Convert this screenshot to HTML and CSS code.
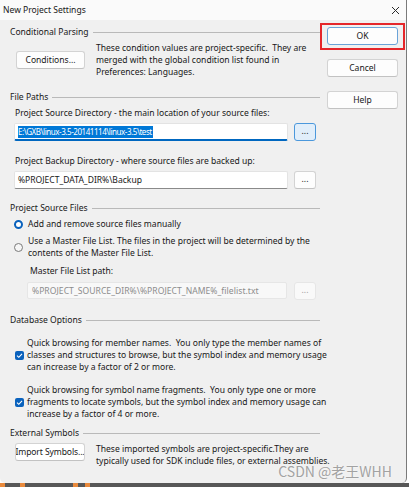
FILE: index.html
```html
<!DOCTYPE html>
<html>
<head>
<meta charset="utf-8">
<link rel="stylesheet" href="styles.css">
</head>
<body>
<div class="window">
  <div class="titlebar">
    <span class="title">New Project Settings</span>
    <svg class="close" width="9" height="9" viewBox="0 0 9 9"><path d="M1 1L8 8M8 1L1 8" stroke="#2b2b2b" stroke-width="1"/></svg>
  </div>
  <div class="content">
    <div class="main">
      <div class="ghead"><span>Conditional Parsing</span><i class="gline"></i></div>
      <div class="crow">
        <div class="btn cbtn">Conditions...</div>
        <div class="ctext">These condition values are project-specific.&nbsp; They are<br>merged with the global condition list found in<br>Preferences: Languages.</div>
      </div>

      <div class="ghead g2"><span>File Paths</span><i class="gline"></i></div>
      <div class="label">Project Source Directory - the main location of your source files:</div>
      <div class="inrow">
        <div class="input focus"><span class="sel">E:\GXB\linux-3.5-20141114\linux-3.5\test</span></div>
        <div class="btn dots hover">...</div>
      </div>
      <div class="label l2">Project Backup Directory - where source files are backed up:</div>
      <div class="inrow">
        <div class="input">%PROJECT_DATA_DIR%\Backup</div>
        <div class="btn dots">...</div>
      </div>

      <div class="ghead g3"><span>Project Source Files</span><i class="gline"></i></div>
      <div class="radio-row r1"><span class="radio on"></span><span>Add and remove source files manually</span></div>
      <div class="radio-row r2"><span class="radio"></span><span>Use a Master File List. The files in the project will be determined by the<br>contents of the Master File List.</span></div>
      <div class="label mlabel">Master File List path:</div>
      <div class="inrow in3">
        <div class="input disabled">%PROJECT_SOURCE_DIR%\%PROJECT_NAME%_filelist.txt</div>
        <div class="btn dots disabled">...</div>
      </div>

      <div class="ghead g4"><span>Database Options</span><i class="gline"></i></div>
      <div class="check-row c1"><span class="check"><svg width="9" height="9" viewBox="0 0 9 9"><path d="M2 4.6L3.8 6.3L7 2.8" fill="none" stroke="#fff" stroke-width="1.1"/></svg></span><span>Quick browsing for member names.&nbsp; You only type the member names of<br>classes and structures to browse, but the symbol index and memory usage<br>can increase by a factor of 2 or more.</span></div>
      <div class="check-row c2"><span class="check"><svg width="9" height="9" viewBox="0 0 9 9"><path d="M2 4.6L3.8 6.3L7 2.8" fill="none" stroke="#fff" stroke-width="1.1"/></svg></span><span>Quick browsing for symbol name fragments.&nbsp; You only type one or more<br>fragments to locate symbols, but the symbol index and memory usage can<br>increase by a factor of 4 or more.</span></div>

      <div class="ghead g5"><span>External Symbols</span><i class="gline"></i></div>
      <div class="crow irow">
        <div class="btn ibtn">Import Symbols...</div>
        <div class="ctext">These imported symbols are project-specific.They are<br>typically used for SDK include files, or external assemblies.</div>
      </div>
    </div>
    <div class="side">
      <div class="btn sbtn ok">OK</div>
      <div class="btn sbtn">Cancel</div>
      <div class="btn sbtn">Help</div>
    </div>
  </div>
  <div class="watermark">CSDN @老王WHH</div>
</div>
<div class="desk"><i class="o1"></i><i class="o2"></i><i class="o3"></i><i class="o4"></i></div>
</body>
</html>
```

FILE: styles.css
```css
* { box-sizing: border-box; }
body {
  margin: 0;
  width: 409px;
  height: 487px;
  overflow: hidden;
  background: #ffffff;
  font-family: "Noto Sans", "Noto Sans CJK SC", sans-serif;
  font-size: 8.55px;
  line-height: 12px;
  color: #181818;
}
.window {
  position: relative;
  width: 407px;
  height: 483px;
  background: #f0f0f0;
  border-right: 1px solid #7a7a7a;
  border-radius: 0 0 5px 5px;
  overflow: hidden;
}
.titlebar {
  height: 20px;
  background: #fafafa;
  display: flex;
  align-items: center;
  justify-content: space-between;
  padding: 0 6px 0 3px;
}
.close { display: block; }
.content {
  display: flex;
  padding: 6px 0 0 10px;
}
.main { width: 310px; }
.side {
  width: 71px;
  margin-left: 7px;
  padding-top: 1px;
  display: flex;
  flex-direction: column;
  gap: 14px;
}
.ghead {
  display: flex;
  align-items: center;
  gap: 4px;
  height: 12px;
}
.gline {
  flex: 1;
  height: 1px;
  background: #b9b9b9;
}
.g2 { margin-top: 13px; }
.g3 { margin-top: 13px; }
.g4 { margin-top: 14px; }
.g5 { margin-top: 7px; }

.btn {
  background: #fdfdfd;
  border: 1px solid #d3d3d3;
  border-bottom-color: #c2c2c2;
  border-radius: 3px;
  height: 18px;
  display: flex;
  align-items: center;
  justify-content: center;
  white-space: nowrap;
  overflow: hidden;
}
.crow {
  display: flex;
  align-items: center;
  margin-top: 4px;
  padding-left: 6px;
}
.cbtn { width: 69px; flex: none; }
.ctext { margin-left: 11px; white-space: nowrap; }
.irow { align-items: flex-start; padding-left: 5px; }
.ibtn { width: 70px; flex: none; background: #fff; padding: 0; letter-spacing: -0.1px; }

.label { padding-left: 5px; margin-top: 4px; white-space: nowrap; }
.l2 { margin-top: 14px; }
.inrow {
  display: flex;
  margin-top: 4px;
  padding-left: 4px;
}
.input {
  width: 274px;
  height: 18px;
  background: #fff;
  border: 1px solid #e3e3e3;
  border-bottom: 1px solid #8a8a8a;
  border-radius: 2px;
  padding-left: 3px;
  display: flex;
  align-items: center;
  white-space: nowrap;
}
.input.focus { border-bottom: 2px solid #0067c0; padding-top: 1px; }
.sel { background: #0078d7; color: #fff; font-size: 8px; line-height: 12px; letter-spacing: -0.45px; padding-right: 1px; }
.dots {
  width: 22px;
  margin-left: 6px;
  flex: none;
  padding-bottom: 3px;
}
.dots.hover { background: #e1eefa; border-color: #4b98dc; }
.in3 { padding-left: 17px; margin-top: 5px; }
.input.disabled {
  width: 260px;
  height: 17px;
  background: #f8f8f8;
  border: 1px solid #e6e6e6;
  color: #8c8c8c;
  padding-left: 4px;
  letter-spacing: 0.05px;
  overflow: hidden;
}
.dots.disabled {
  background: #f9f9f9;
  border-color: #e6e6e6;
  color: #a0a0a0;
  margin-left: 7px;
}
.mlabel { padding-left: 20px; margin-top: 6px; }

.radio-row {
  display: flex;
  align-items: center;
  gap: 5px;
  padding-left: 4px;
  white-space: nowrap;
}
.r1 { margin-top: 4px; }
.r2 { margin-top: 5px; }
.radio {
  width: 9px;
  height: 9px;
  border-radius: 50%;
  border: 1px solid #7a7a7a;
  background: #f6f6f6;
  flex: none;
}
.radio.on { border: 2.6px solid #0a62bd; background: #fff; }

.check-row {
  display: flex;
  align-items: center;
  gap: 3px;
  padding-left: 5px;
  white-space: nowrap;
}
.c1 { margin-top: 11px; }
.c2 { margin-top: 11px; }
.check {
  width: 9px;
  height: 9px;
  border-radius: 2px;
  background: #0a62bd;
  flex: none;
  display: block;
}
.check svg { display: block; }

.sbtn { width: 71px; }
.ok { position: relative; border-color: #6aa3d8; overflow: visible; }
.ok::after {
  content: "";
  position: absolute;
  left: -8px;
  right: -8px;
  top: -5px;
  bottom: -6px;
  border: 2px solid #e5262a;
}
.watermark {
  position: absolute;
  right: 14px;
  top: 463px;
  font-family: "Noto Sans CJK SC", sans-serif;
  font-size: 14px;
  line-height: 16px;
  color: #a2a2a2;
  text-shadow: 0 0 2px #fff;
}
.desk {
  height: 4px;
  background: #575757;
  display: flex;
}
.desk i { display: block; height: 4px; background: #e98a3c; }
.o1 { width: 5px; }
.o2 { width: 5px; margin-left: 15px; }
.o3 { width: 5px; margin-left: 48px; }
.o4 { width: 5px; margin-left: 7px; }
```
